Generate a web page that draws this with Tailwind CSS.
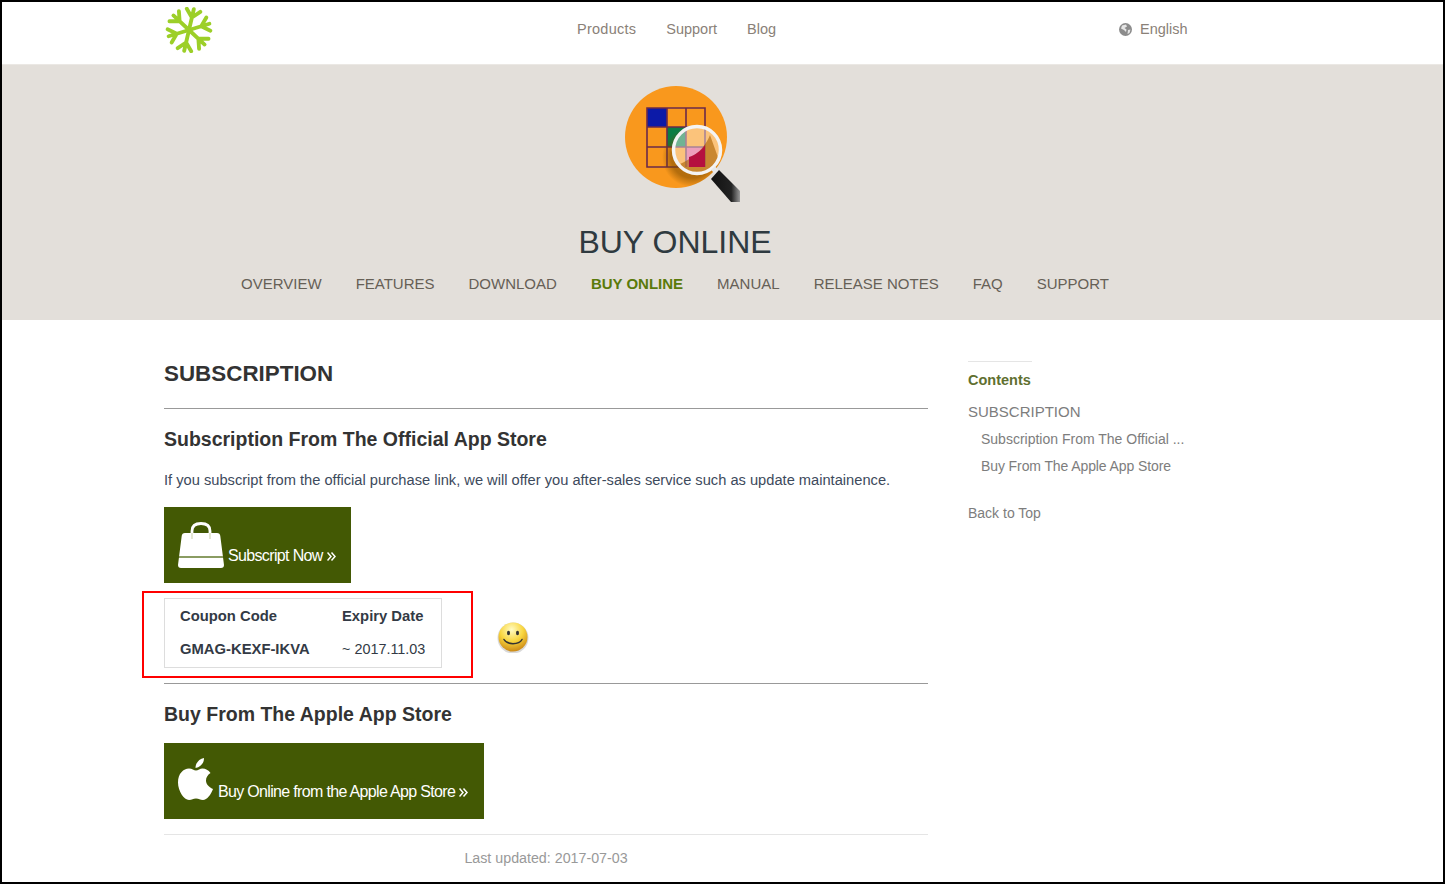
<!DOCTYPE html>
<html lang="en">
<head>
  <meta charset="UTF-8">
  <title>Buy Online</title>
  <script src="https://cdn.jsdelivr.net/npm/@tailwindcss/browser@4"></script>
</head>
<body class="bg-white text-[#333] font-['Liberation_Sans',Arial,sans-serif]">
<div class="relative h-[884px] border-2 border-black overflow-hidden">

  <!-- Top bar -->
  <header class="flex h-[62px] items-start pl-[162px] text-[14.5px] text-[#8a8178]">
    <svg class="mt-[5px] ml-[1px] h-[46px] w-[48px]" viewBox="-22.500 -21.500 45 43" fill="none" stroke="#9ccf28" stroke-width="3.600" stroke-linecap="round" stroke-linejoin="round">
      <g transform="rotate(13)">
        <path d="M0 0L0 -20M-6.500 -19L0 -12L6.500 -19"/>
        <g transform="rotate(60)"><path d="M0 0L0 -20M-6.500 -19L0 -12L6.500 -19"/></g>
        <g transform="rotate(120)"><path d="M0 0L0 -20M-6.500 -19L0 -12L6.500 -19"/></g>
        <g transform="rotate(180)"><path d="M0 0L0 -20M-6.500 -19L0 -12L6.500 -19"/></g>
        <g transform="rotate(240)"><path d="M0 0L0 -20M-6.500 -19L0 -12L6.500 -19"/></g>
        <g transform="rotate(300)"><path d="M0 0L0 -20M-6.500 -19L0 -12L6.500 -19"/></g>
      </g>
    </svg>
    <nav class="ml-[364px] mt-[19px] flex gap-[30px] leading-[16px]">
      <a class="tracking-[0.25px]">Products</a>
      <a>Support</a>
      <a>Blog</a>
    </nav>
    <div class="ml-[343px] mt-[19px] flex items-center gap-[8px] leading-[16px]">
      <svg class="h-[13px] w-[13px]" viewBox="0 0 13 13"><circle cx="6.5" cy="6.5" r="6.5" fill="#8c8c8c"/><path d="M3 2.5L7 1.5L8 3.5L5.5 5L7.5 6.5L7 9L5 7L2 5.5ZM9 7L11.5 6.5L10.5 10L8.5 11Z" fill="#e6e6e6"/></svg>
      <span>English</span>
    </div>
  </header>

  <!-- Product hero -->
  <section class="h-[256px] bg-[#e3dfda] border-t border-[#ebe8e4] flex flex-col items-center pr-[95px]">
    <svg class="mt-[20px] ml-[16px] h-[118px] w-[117px]" viewBox="0 0 117 118">
      <defs>
        <linearGradient id="handle" x1="0" y1="0" x2="1" y2="0"><stop offset="0" stop-color="#111"/><stop offset="0.7" stop-color="#222"/><stop offset="1" stop-color="#999"/></linearGradient>
        <radialGradient id="shadow" cx="0.5" cy="0.5" r="0.5"><stop offset="0.7" stop-color="#7a4a00" stop-opacity="0.55"/><stop offset="1" stop-color="#7a4a00" stop-opacity="0"/></radialGradient>
        <clipPath id="lens"><circle cx="72" cy="65" r="24"/></clipPath>
        <clipPath id="disc"><circle cx="51" cy="52" r="51"/></clipPath>
      </defs>
      <circle cx="51" cy="52" r="51" fill="#f9981d"/>
      <rect x="22" y="23" width="20" height="19" fill="#0c1aa8"/>
      <rect x="42" y="42" width="19" height="20" fill="#0b7d45"/>
      <path d="M22 23H80V82H22ZM42 23V82M61 23V82M22 42H80M22 62H80" fill="none" stroke="#6b2a4a" stroke-width="1.600"/>
      <circle cx="67" cy="72" r="30" fill="url(#shadow)" clip-path="url(#disc)"/>
      <g clip-path="url(#lens)">
        <rect x="42" y="40" width="60" height="50" fill="#f9981d"/>
        <rect x="42" y="42" width="19" height="20" fill="#0b7d45"/>
        <rect x="61" y="62" width="19" height="20" fill="#e05a8a"/>
        <path d="M42 42H80M42 62H80M61 23V82M80 23V82" fill="none" stroke="#6b2a4a" stroke-width="1.600"/>
        <circle cx="72" cy="65" r="24" fill="#fff" fill-opacity="0.42"/>
        <path d="M47 82C60 78 78 68 85 50L100 92H47Z" fill="#a85f00" fill-opacity="0.6"/>
        <path d="M64 82V72C70 70 76 66 80 60V82Z" fill="#b5103f"/>
      </g>
      <circle cx="72" cy="65" r="23.500" fill="none" stroke="#f4f4f4" stroke-width="3.500"/>
      <path d="M88 83L94 90" stroke="#e8e8e8" stroke-width="5"/>
      <path d="M94 85L115 106V117H106L86 94Z" fill="url(#handle)"/>
    </svg>
    <h1 class="mt-[19px] text-[32px] leading-[40px] text-[#2f3a40]">BUY ONLINE</h1>
    <nav class="mt-[12px] flex gap-[34px] text-[15px] leading-[20px] text-[#666056]">
      <a>OVERVIEW</a>
      <a>FEATURES</a>
      <a>DOWNLOAD</a>
      <a class="font-bold text-[#5a7a0a]">BUY ONLINE</a>
      <a>MANUAL</a>
      <a>RELEASE NOTES</a>
      <a>FAQ</a>
      <a>SUPPORT</a>
    </nav>
  </section>

  <!-- Body -->
  <div class="flex pl-[162px]">
    <main class="w-[764px]">
      <h2 class="mt-[39px] text-[22.4px] leading-[30px] font-bold text-[#333]">SUBSCRIPTION</h2>
      <hr class="mt-[19px] border-t border-[#999]">
      <h3 class="mt-[18px] text-[19.5px] leading-[24px] font-bold text-[#333]">Subscription From The Official App Store</h3>
      <p class="mt-[19px] text-[14.66px] leading-[20px] text-[#3d4a5c]">If you subscript from the official purchase link, we will offer you after-sales service such as update maintainence.</p>

      <a class="mt-[17px] flex h-[76px] w-[187px] items-end bg-[#435904] pb-[17px] pl-[14px] text-[16px] leading-[20px] tracking-[-0.65px] text-white">
        <svg class="mb-[-2px] h-[46px] w-[46px]" viewBox="0 0 46 46">
          <path d="M14 18V9C14 4 17 1.500 23 1.500C29 1.500 32 4 32 9V18" fill="none" stroke="#fff" stroke-width="2.800" stroke-linecap="round"/>
          <path d="M7 11H39Q42 11 42.300 14L46 43Q46 46 43 46H3Q0 46 0 43L3.700 14Q4 11 7 11Z" fill="#fff"/>
          <path d="M14 11V17M32 11V17" stroke="#c9cfa8" stroke-width="1"/>
          <path d="M1 35H45" stroke="#8a9c62" stroke-width="2"/>
        </svg>
        <span class="ml-[4px]">Subscript Now</span>
        <svg class="mb-[5px] ml-[4px] h-[9px] w-[9px]" viewBox="0 0 9 9" fill="none" stroke="#fff" stroke-width="1.500"><path d="M0.500 0.500L4 4.500L0.500 8.500M4.500 0.500L8 4.500L4.500 8.500"/></svg>
      </a>

      <!-- Coupon table -->
      <div class="mt-[15px] w-[278px] h-[70px] border border-[#ddd] pl-[15px] pt-[7px] text-[14.8px] leading-[20px] text-[#333a45]">
        <div class="flex font-bold"><span class="w-[162px]">Coupon Code</span><span>Expiry Date</span></div>
        <div class="mt-[13px] flex"><span class="w-[162px] font-bold">GMAG-KEXF-IKVA</span><span class="text-[14.4px]">~ 2017.11.03</span></div>
      </div>

      <hr class="mt-[15px] border-t border-[#999]">
      <h3 class="mt-[18px] text-[19.5px] leading-[24px] font-bold text-[#333]">Buy From The Apple App Store</h3>

      <a class="mt-[17px] flex h-[76px] w-[320px] items-end bg-[#435904] pb-[17px] pl-[14px] text-[16px] leading-[20px] tracking-[-0.67px] text-white">
        <svg class="mb-[2px] h-[42px] w-[36px]" viewBox="0 0 36 42" fill="#fff">
          <path d="M24.500 10.500C27.500 10.500 30.500 12 32.500 15C29.500 17 28 19.500 28 22.500C28 26 30.500 29 35 31C33 36.500 29 42 25 42C22 42 21 40.500 18 40.500C15 40.500 14 42 11 42C6 42 0 33 0 24.500C0 15.500 5.500 10.500 11 10.500C14 10.500 16 12.500 18 12.500C20 12.500 22 10.500 24.500 10.500Z"/>
          <path d="M17.500 10C17.500 5 21 1 26 0C26 5 23 9 17.500 10Z"/>
        </svg>
        <span class="ml-[4px]">Buy Online from the Apple App Store</span>
        <svg class="mb-[5px] ml-[4px] h-[9px] w-[9px]" viewBox="0 0 9 9" fill="none" stroke="#fff" stroke-width="1.500"><path d="M0.500 0.500L4 4.500L0.500 8.500M4.500 0.500L8 4.500L4.500 8.500"/></svg>
      </a>

      <hr class="mt-[15px] border-t border-[#e5e5e5]">
      <p class="mt-[13px] text-center text-[14.25px] leading-[20px] text-[#999]">Last updated: 2017-07-03</p>
    </main>

    <!-- Contents sidebar -->
    <aside class="ml-[40px] w-[217px] pt-[41px] text-[#7d7d7d]">
      <div class="w-[64px] border-t border-[#e5e5e5]"></div>
      <div class="mt-[8px] text-[14.5px] leading-[20px] font-bold text-[#5f7030]">Contents</div>
      <div class="mt-[12px] text-[15px] leading-[20px]">SUBSCRIPTION</div>
      <div class="mt-[7px] pl-[13px] text-[14px] leading-[20px] whitespace-nowrap">Subscription From The Official ...</div>
      <div class="mt-[7px] pl-[13px] text-[14px] leading-[20px] tracking-[-0.1px]">Buy From The Apple App Store</div>
      <div class="mt-[27px] text-[14px] leading-[20px]">Back to Top</div>
    </aside>
  </div>

  <!-- Annotation over the page -->
  <div class="absolute left-[140px] top-[589px] h-[87px] w-[331px] border-2 border-[#f00]"></div>
  <svg class="absolute left-[495px] top-[619px] h-[32px] w-[32px]" viewBox="0 0 32 32">
    <defs>
      <radialGradient id="smile" cx="0.45" cy="0.25" r="0.8"><stop offset="0" stop-color="#fffbc4"/><stop offset="0.5" stop-color="#f9d63e"/><stop offset="1" stop-color="#c67f10"/></radialGradient>
    </defs>
    <circle cx="16" cy="17" r="15.500" fill="#000" fill-opacity="0.15"/>
    <circle cx="16" cy="16" r="14.500" fill="url(#smile)"/>
    <ellipse cx="11.500" cy="12" rx="1.500" ry="2.200" fill="#333"/>
    <ellipse cx="20.500" cy="12" rx="1.500" ry="2.200" fill="#333"/>
    <path d="M7 18.500C10 24 22 24 25 18.500" fill="none" stroke="#333" stroke-width="1.500" stroke-linecap="round"/>
  </svg>
</div>
</body>
</html>
